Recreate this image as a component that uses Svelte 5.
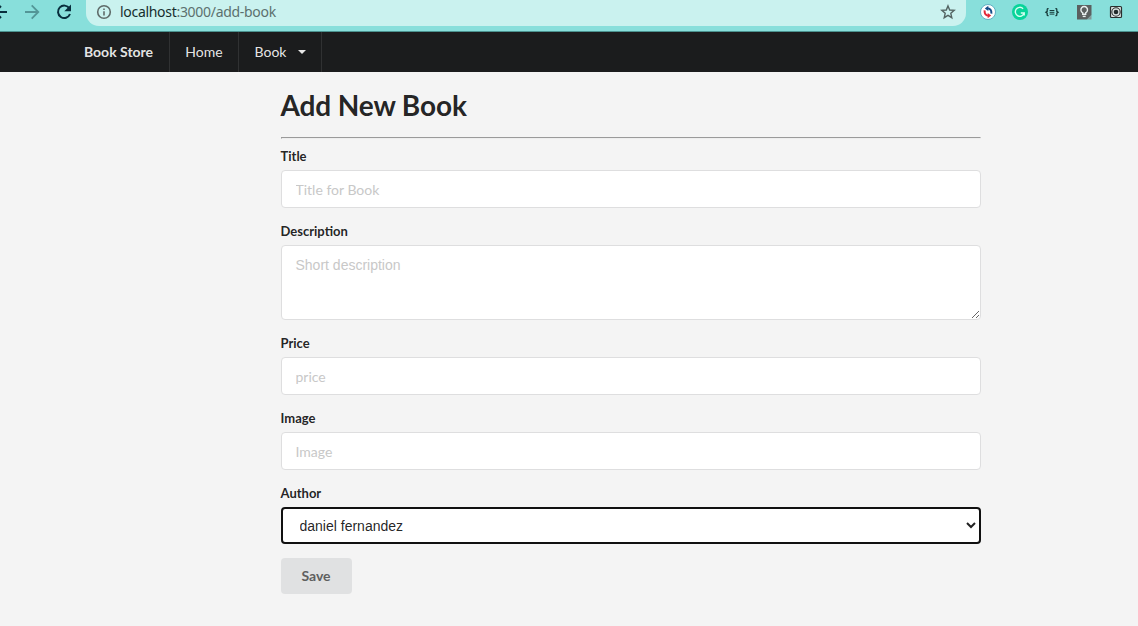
<script>
  let author = $state('daniel fernandez');
</script>

<div class="page">
  <header class="browser">
    <div class="controls">
      <svg class="back" width="8" height="24" viewBox="0 0 8 24"><path d="M0 12H7M-5 12L1 6M-5 12L1 18" /></svg>
      <svg class="forward" width="16" height="24" viewBox="0 0 16 24"><path d="M1 12H14M7.7 5.4L14.3 12L7.7 18.6" /></svg>
      <svg class="reload" width="16" height="24" viewBox="0 0 16 24"><path d="M13.4 8.4A6.2 6.2 0 1 0 14 14" /><path class="solid" d="M15 4.5V11.2H8.3Z" /></svg>
    </div>
    <div class="address">
      <svg width="16" height="16" viewBox="0 0 16 16" fill="none" stroke="#5f6b69" stroke-width="1.6"><circle cx="8" cy="8" r="6.3" /><path d="M8 7.2V11.5M8 4.4V6" /></svg>
      <span class="url"><b>localhost</b>:3000/add-book</span>
      <svg class="star" width="16" height="16" viewBox="0 0 16 16" fill="none" stroke="#536462" stroke-width="1.4"><path d="M8 1.9L9.7 6L14.2 6.4L10.8 9.3L11.8 13.7L8 11.4L4.2 13.7L5.2 9.3L1.8 6.4L6.3 6Z" /></svg>
    </div>
    <div class="extensions">
      <svg width="16" height="16" viewBox="0 0 16 16"><circle cx="8" cy="8" r="7.5" fill="#fff" stroke="#4a9eb8" stroke-width=".8" /><path d="M7 4.3C10.2 4.3 11.6 6.2 11.4 9.6" fill="none" stroke="#144b87" stroke-width="2" /><path d="M8.3 1.8L4.8 4.4L8.3 7Z" fill="#144b87" /><path d="M4.6 6.4C4.4 9.8 5.8 11.7 9 11.7" fill="none" stroke="#e32636" stroke-width="2" /><path d="M7.7 9L11.2 11.6L7.7 14.2Z" fill="#e32636" /></svg>
      <svg width="16" height="16" viewBox="0 0 16 16"><circle cx="8" cy="8" r="8" fill="#08d49a" /><path d="M11.1 4.7A4.5 4.5 0 1 0 12.2 9H8.8M12.2 8.2V11.6" fill="none" stroke="#d5fff1" stroke-width="1.4" /></svg>
      <svg width="16" height="16" viewBox="0 0 16 16" fill="none" stroke="#183c3b" stroke-width="1.3"><path d="M4.6 4.7H4Q3.2 4.7 3.2 5.5V7.3L1.9 8.2L3.2 9.1V10.9Q3.2 11.7 4 11.7H4.6M11.4 4.7H12Q12.8 4.7 12.8 5.5V7.3L14.1 8.2L12.8 9.1V10.9Q12.8 11.7 12 11.7H11.4" /><path d="M5.6 6.5H10.4M5.6 8.3H10.4M5.6 10.1H10.4" stroke-width="1" /></svg>
      <svg width="16" height="16" viewBox="0 0 16 16"><path d="M1 1H15.5V11L11 15.5H1Z" fill="#5b5f5f" /><path d="M15.5 11V15.5H11Z" fill="#849998" /><path d="M6.7 10.2V8.8A3.3 3.3 0 1 1 9.7 8.8V10.2Z" fill="none" stroke="#e9efef" stroke-width="1.4" /><path d="M6.7 12.4H9.7" stroke="#e9efef" stroke-width="1.4" /></svg>
      <svg width="16" height="16" viewBox="0 0 16 16" fill="none" stroke="#2a2f2f"><rect x="2.5" y="2.5" width="11" height="11" rx="1" fill="#dce3e2" stroke-width="1.2" /><circle cx="8" cy="8" r="4.2" stroke-width="1.1" /><circle cx="8" cy="8" r="2.3" fill="#222b2b" stroke="none" /></svg>
    </div>
  </header>

  <nav>
    <a class="brand" href="#home">Book Store</a>
    <a class="home" href="#home">Home</a>
    <a class="book" href="#books">Book <span class="caret"></span></a>
  </nav>

  <main>
    <h1>Add New Book</h1>
    <hr />
    <form>
      <div class="field">
        <label for="title">Title</label>
        <input id="title" placeholder="Title for Book" />
      </div>
      <div class="field">
        <label for="description">Description</label>
        <textarea id="description" placeholder="Short description"></textarea>
      </div>
      <div class="field">
        <label for="price">Price</label>
        <input id="price" placeholder="price" />
      </div>
      <div class="field">
        <label for="image">Image</label>
        <input id="image" placeholder="Image" />
      </div>
      <div class="field">
        <label for="author">Author</label>
        <select id="author" bind:value={author}>
          <option>daniel fernandez</option>
        </select>
      </div>
      <button type="button">Save</button>
    </form>
  </main>
</div>

<style>
  :global(body) { margin: 0; background: #f4f4f4; }
  * { box-sizing: border-box; }
  .page { height: 626px; overflow: hidden; background: #f4f4f4; font: 14px/20px Lato, sans-serif; color: rgba(0,0,0,.87); }
  .browser { display: flex; height: 32px; background: #88dfdb; border-bottom: 1px solid #4c9390; }
  .controls { display: flex; width: 86px; flex: none; }
  .controls svg { flex: none; fill: none; stroke: #082e3d; stroke-width: 2; }
  .controls .forward { margin-left: 16px; stroke: #539697; stroke-width: 1.8; }
  .controls .reload { margin-left: 16px; }
  .controls .solid { fill: #082e3d; stroke: none; }
  .address { width: 880px; height: 26px; border-radius: 0 0 13px 13px; background: #caf2ef; display: flex; align-items: flex-start; padding: 4px 10px; }
  .url { margin: -2px 0 0 8px; font: 14px/20px "Noto Sans", sans-serif; color: #5c706e; letter-spacing: -.3px; white-space: nowrap; }
  .url b { font-weight: 400; color: #162e2d; }
  .star { margin-left: auto; }
  .extensions { display: flex; gap: 16px; margin-left: 14px; padding-top: 4px; }
  nav { display: flex; height: 40px; background: #1b1c1d; padding-left: 68px; }
  nav a { display: flex; align-items: center; justify-content: center; color: rgba(255,255,255,.9); text-decoration: none; border-right: 1px solid #303132; }
  .brand { width: 102px; font-weight: 700; }
  .home { width: 69px; }
  .book { width: 83px; padding-left: 1px; }
  .caret { border: 4px solid transparent; border-top-color: #e8e8e8; border-bottom: 0; margin-left: 12px; }
  main { width: 700px; margin-left: 280.5px; }
  h1 { margin: 0; padding: 15px 0 14px; font-size: 28px; line-height: 36px; font-weight: 700; letter-spacing: -.12px; }
  hr { height: 2px; margin: 0 0 8px; border: 1px solid #9a9a9a; border-right-color: #eee; border-bottom-color: #eee; }
  .field { margin-bottom: 14px; }
  label { display: block; font-size: 13px; line-height: 19px; font-weight: 700; margin-bottom: 4px; }
  input, textarea { display: block; width: 700px; border: 1px solid #dededf; border-radius: 4px; background: #fff; outline: none; }
  input { height: 38px; padding: 9px 14px; font: 14px/17px Lato, sans-serif; }
  textarea { height: 75px; padding: 10px 14px; font: 14px/18px "Liberation Sans", sans-serif; resize: vertical; }
  input::placeholder, textarea::placeholder { color: #c8c8c8; opacity: 1; }
  select { display: block; width: 700px; height: 37px; padding: 0 0 0 13px; border: 2px solid #101010; border-radius: 4px; background: #fff; color: rgba(0,0,0,.87); font: 14px "Liberation Sans", sans-serif; outline: none; }
  button { display: block; width: 71px; height: 36px; border: 0; border-radius: 4px; background: #e0e1e2; color: #5f5f60; font: 700 14px/14px Lato, sans-serif; padding: 0; }
</style>
